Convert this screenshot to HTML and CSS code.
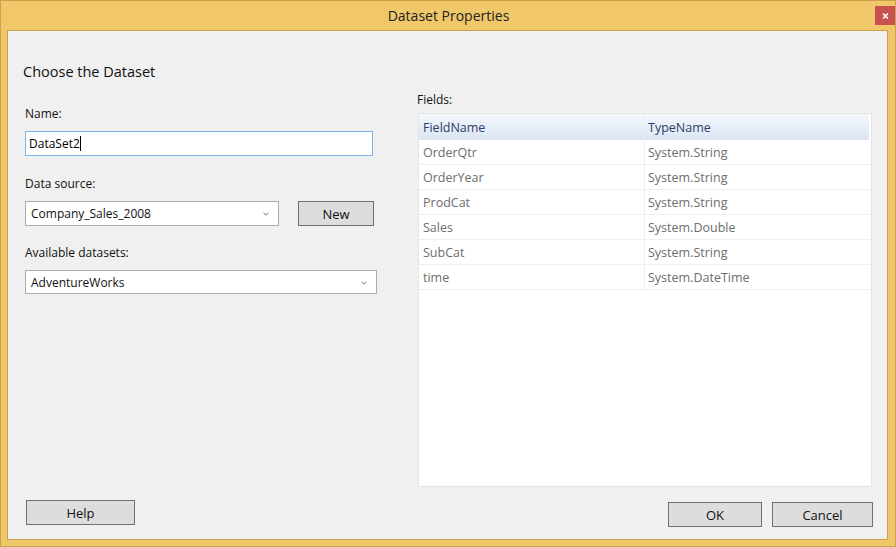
FILE: index.html
```html
<!DOCTYPE html>
<html>
<head>
<meta charset="utf-8">
<link rel="stylesheet" href="styles.css">
</head>
<body>
<div class="window">
  <div class="titlebar">
    <div class="title">Dataset Properties</div>
    <div class="close"><svg width="7" height="6" viewBox="0 0 7 6"><path d="M1 0.5 L6 5.5 M6 0.5 L1 5.5" stroke="#fff" stroke-width="1.6"/></svg></div>
  </div>
  <div class="client">
    <div class="main">
      <div class="left">
        <div class="heading">Choose the Dataset</div>
        <div class="label l-name">Name:</div>
        <div class="textbox">DataSet2<span class="caret"></span></div>
        <div class="label l-src">Data source:</div>
        <div class="row">
          <div class="combo combo-src">Company_Sales_2008<svg class="arrow" width="6" height="4" viewBox="0 0 6 4"><path d="M0.5 0.8 L3 3.2 L5.5 0.8" fill="none" stroke="#707070" stroke-width="1"/></svg></div>
          <div class="btn btn-new">New</div>
        </div>
        <div class="label l-avail">Available datasets:</div>
        <div class="combo combo-avail">AdventureWorks<svg class="arrow" width="6" height="4" viewBox="0 0 6 4"><path d="M0.5 0.8 L3 3.2 L5.5 0.8" fill="none" stroke="#707070" stroke-width="1"/></svg></div>
      </div>
      <div class="right">
        <div class="label l-fields">Fields:</div>
        <div class="grid">
          <div class="grow head"><div class="c1">FieldName</div><div class="c2">TypeName</div></div>
          <div class="grow"><div class="c1">OrderQtr</div><div class="c2">System.String</div></div>
          <div class="grow"><div class="c1">OrderYear</div><div class="c2">System.String</div></div>
          <div class="grow"><div class="c1">ProdCat</div><div class="c2">System.String</div></div>
          <div class="grow"><div class="c1">Sales</div><div class="c2">System.Double</div></div>
          <div class="grow"><div class="c1">SubCat</div><div class="c2">System.String</div></div>
          <div class="grow"><div class="c1">time</div><div class="c2">System.DateTime</div></div>
        </div>
      </div>
    </div>
    <div class="footer">
      <div class="btn btn-help">Help</div>
      <div class="actions">
        <div class="btn btn-ok">OK</div>
        <div class="btn btn-cancel">Cancel</div>
      </div>
    </div>
  </div>
</div>
</body>
</html>
```
FILE: styles.css
```css
* { box-sizing: border-box; }
html, body { margin: 0; padding: 0; }
body {
  width: 896px; height: 547px; overflow: hidden;
  font-family: "Open Sans", "Noto Sans", sans-serif;
  font-size: 12px; color: #000;
}
.window {
  width: 896px; height: 547px;
  background: #f0c86a;
  border: 1px solid #c9a24e;
  padding: 0 7px 6px 6px;
  display: flex; flex-direction: column;
}
.titlebar {
  height: 29px; position: relative;
  display: flex; align-items: center; justify-content: center;
}
.title {
  font-size: 14px; color: #222; margin-top: -1px; margin-left: 2px;
}
.close {
  position: absolute; right: -7px; top: 5px;
  width: 20px; height: 19px; background: #c75050;
  display: flex; align-items: center; justify-content: center;
}
.client {
  flex: 1;
  background: #f0f0f0;
  border: 1px solid #c9a24e;
  display: flex; flex-direction: column;
  padding: 0 0 0 17px;
}
.main { display: flex; flex: 1; }
.left { width: 352px; display: flex; flex-direction: column; }
.heading { font-size: 14.5px; margin-top: 31px; margin-left: -2px; line-height: 20px; color: #111; }
.label { line-height: 16px; color: #111; }
.l-name { margin-top: 24px; }
.textbox {
  margin-top: 9px; width: 348px; height: 25px;
  background: #fff; border: 1px solid #7eb4ea;
  padding: 0 0 0 3px; line-height: 22px;
  display: flex; align-items: center;
}
.caret { display: inline-block; width: 1px; height: 15px; background: #000; }
.l-src { margin-top: 20px; }
.row { display: flex; margin-top: 9px; }
.combo {
  height: 25px; background: #fff; border: 1px solid #acacac;
  padding: 0 9px 0 5px; display: flex; align-items: center; justify-content: space-between;
  color: #111;
}
.combo-src { width: 254px; }
.combo-avail { width: 352px; margin-top: 9px; height: 24px; }
.arrow { margin-top: 1px; }
.l-avail { margin-top: 19px; }
.btn {
  background: #dddddd; border: 1px solid #707070;
  display: flex; align-items: center; justify-content: center;
  color: #111; font-size: 13px;
}
.btn-new { width: 76px; height: 25px; margin-left: 19px; }
.right { margin-left: 41px; width: 454px; display: flex; flex-direction: column; }
.l-fields { margin-top: 61px; margin-left: -1px; }
.grid {
  margin-top: 5px; height: 374px;
  background: #fff; border: 1px solid #e4e4e4;
}
.grow { display: flex; height: 25px; border-bottom: 1px solid #efefef; color: #6d6d6d; font-size: 12.5px; }
.grow.head {
  height: 26px; border-bottom: none;
  background: linear-gradient(#f5f8fc, #dae5f3);
  color: #2d3d6a; margin-right: 2px;
}
.c1 { width: 226px; padding-left: 4px; display: flex; align-items: center; border-right: 1px solid #efefef; }
.grow.head .c1 { border-right: 1px solid #e8eef6; }
.c2 { flex: 1; padding-left: 3px; display: flex; align-items: center; }
.footer {
  height: 52px; display: flex; justify-content: space-between; align-items: flex-start;
  padding-right: 14px;
}
.btn-help { width: 109px; height: 25px; margin-top: 13px; margin-left: 1px; }
.actions { display: flex; gap: 10px; margin-top: 15px; }
.btn-ok { width: 94px; height: 25px; }
.btn-cancel { width: 101px; height: 25px; }
```
